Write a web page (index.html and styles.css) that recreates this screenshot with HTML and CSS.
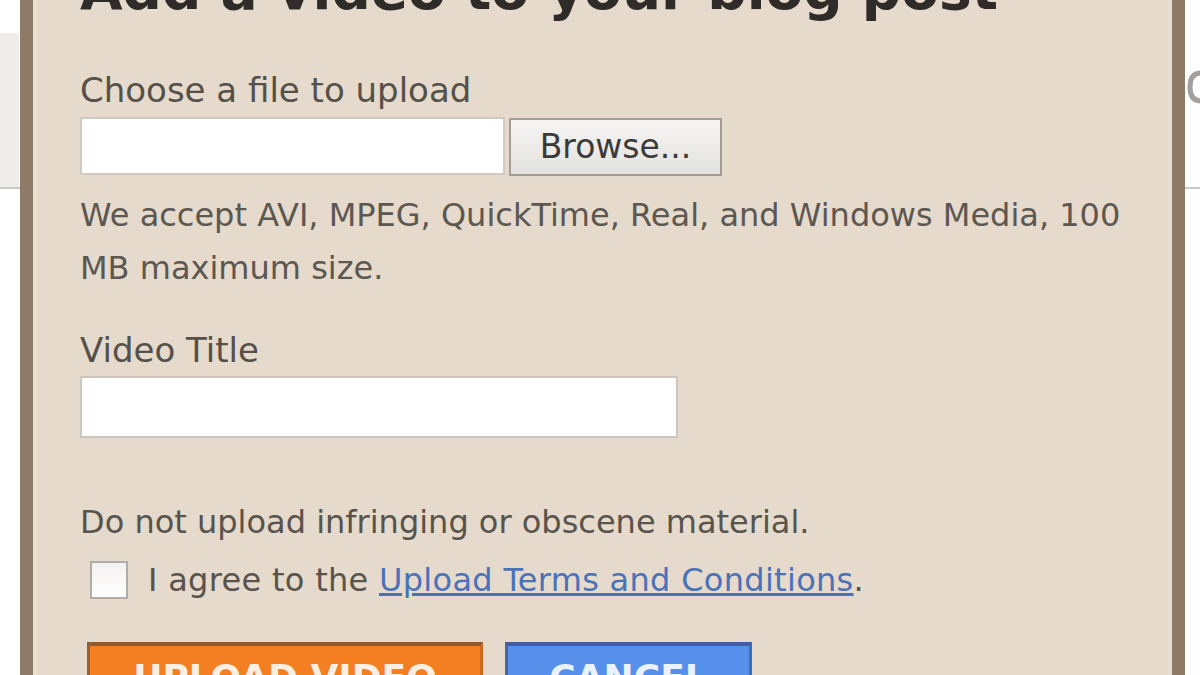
FILE: index.html
```html
<!DOCTYPE html>
<html lang="en">
<head>
<meta charset="utf-8">
<title>Add a video to your blog post</title>
<link rel="stylesheet" href="styles.css">
</head>
<body>
<div class="page">
  <div class="page-header">
    <svg class="page-glyph" width="14" height="40" viewBox="0 0 14 40" aria-hidden="true">
      <path d="M14 6 C6 6 3 12 3 20 C3 28 6 34 14 34" fill="none" stroke="#a3a09b" stroke-width="5"/>
    </svg>
  </div>
</div>
<div class="dialog">
  <h1 class="dialog-title">Add a video to your blog post</h1>
  <div class="field-label">Choose a file to upload</div>
  <div class="file-row">
    <div class="file-box"></div>
    <div class="browse-btn">Browse...</div>
  </div>
  <p class="hint">We accept AVI, MPEG, QuickTime, Real, and Windows Media, 100 MB maximum size.</p>
  <div class="field-label title-label">Video Title</div>
  <div class="text-box"></div>
  <p class="notice">Do not upload infringing or obscene material.</p>
  <div class="agree-row">
    <span class="checkbox"></span>
    <span class="agree-text">I agree to the <a class="terms-link" href="#">Upload Terms and Conditions</a>.</span>
  </div>
  <div class="actions">
    <div class="btn btn-upload">UPLOAD VIDEO</div>
    <div class="btn btn-cancel">CANCEL</div>
  </div>
</div>
</body>
</html>
```
FILE: styles.css
```css
html, body {
  margin: 0;
  padding: 0;
  background: #ffffff;
  width: 1200px;
  height: 675px;
  overflow: hidden;
  font-family: "DejaVu Sans", Verdana, sans-serif;
}

.page {
  padding-top: 33px;
}

.page-header {
  position: relative;
  height: 154px;
  background: linear-gradient(to right, #efedea 0, #efedea 19px, #ffffff 19px);
  border-bottom: 2px solid #c8c8c6;
}

.page-glyph {
  position: absolute;
  left: 1187px;
  top: 34px;
}

.dialog {
  position: absolute;
  left: 20px;
  top: 0;
  width: 1092px;
  height: 675px;
  background: #e5dacb;
  border-left: 13px solid #8d7b67;
  border-right: 13px solid #8d7b67;
  box-shadow: inset 4px 0 0 #ebe1d3, inset -4px 0 0 #e9dfd1;
  padding: 0 0 0 47px;
  box-sizing: content-box;
  overflow: hidden;
}

.dialog-title {
  margin: -40px 0 0 0;
  font-size: 55px;
  line-height: 60px;
  font-weight: bold;
  color: #2e2b28;
  white-space: nowrap;
}

.field-label {
  margin-top: 50px;
  font-size: 34px;
  line-height: 40px;
  color: #55504a;
}

.file-row {
  display: flex;
  align-items: flex-start;
  margin-top: 7px;
}

.file-box {
  width: 421px;
  height: 54px;
  background: #ffffff;
  border: 2px solid #cfcac2;
}

.browse-btn {
  width: 209px;
  height: 54px;
  margin-left: 4px;
  margin-top: 1px;
  border: 2px solid #a29d97;
  background: linear-gradient(#f6f5f3, #e4e2df);
  font-size: 33px;
  line-height: 54px;
  text-align: center;
  color: #3c3a38;
}

.hint {
  width: 1070px;
  margin: 13px 0 0 0;
  font-size: 32px;
  line-height: 53px;
  color: #5c5751;
}

.title-label {
  margin-top: 35px;
}

.text-box {
  width: 594px;
  height: 58px;
  margin-top: 6px;
  background: #ffffff;
  border: 2px solid #cbc6be;
}

.notice {
  margin: 64px 0 0 0;
  font-size: 32px;
  line-height: 40px;
  color: #58534d;
}

.agree-row {
  display: flex;
  align-items: center;
  margin-top: 18px;
  height: 40px;
}

.checkbox {
  width: 34px;
  height: 34px;
  margin-left: 10px;
  border: 2px solid #b0aca6;
  background: linear-gradient(#f3f2f0, #ffffff);
}

.agree-text {
  margin-left: 20px;
  font-size: 32px;
  line-height: 40px;
  color: #58534d;
  letter-spacing: 0.3px;
}

.terms-link {
  color: #4a72b8;
  text-decoration: underline;
}

.actions {
  display: flex;
  margin-top: 42px;
  margin-left: 7px;
  gap: 22px;
}

.btn {
  height: 70px;
  box-sizing: border-box;
  padding-top: 10px;
  font-size: 36px;
  line-height: 44px;
  font-weight: bold;
  color: #fbeee2;
  text-align: center;
}

.btn-upload {
  width: 396px;
  background: #f47e22;
  border-top: 4px solid #8e5a34;
  border-left: 3px solid #9a5e30;
  border-right: 3px solid #c86a22;
}

.btn-cancel {
  width: 247px;
  background: #5690ea;
  border-top: 4px solid #3d5f9e;
  border-left: 3px solid #44679f;
  border-right: 3px solid #3f6bb5;
  color: #eaf2ff;
}
```
